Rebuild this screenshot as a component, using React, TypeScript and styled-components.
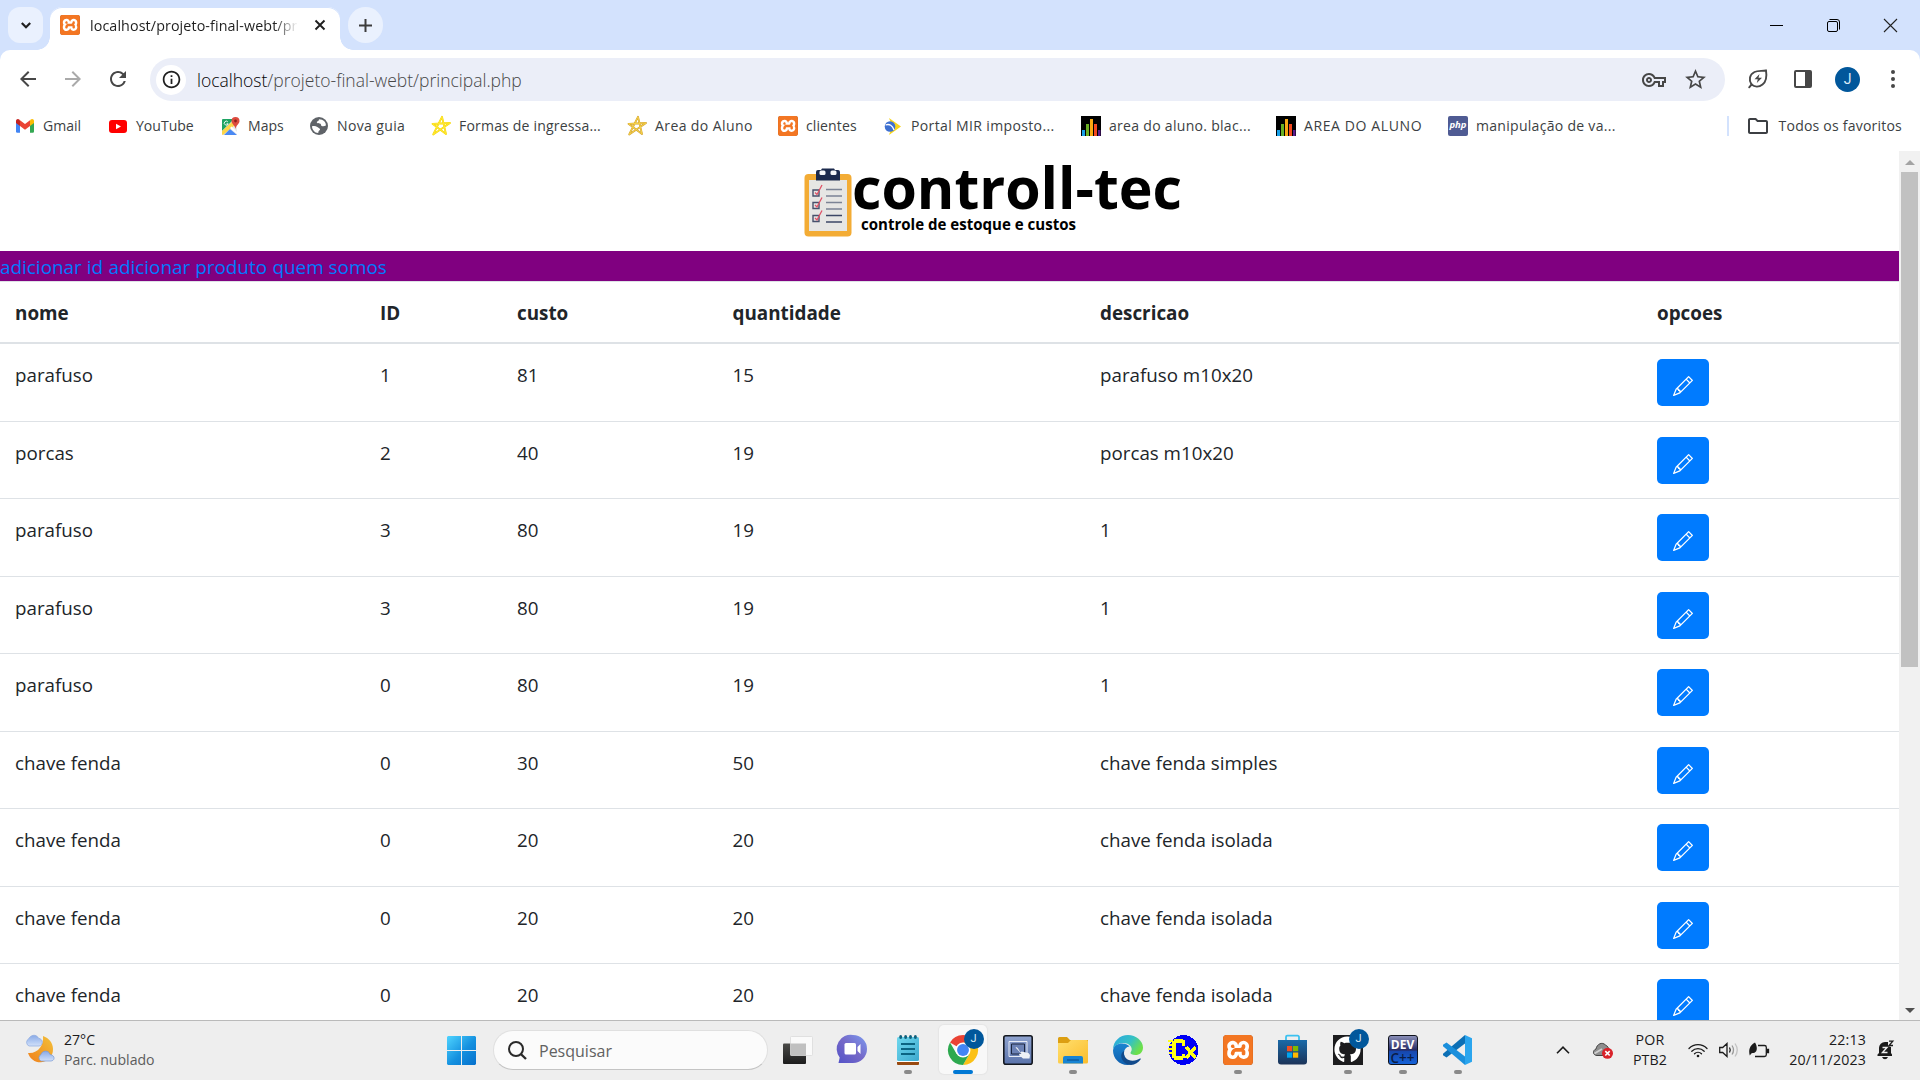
import React from "react";
import styled, { createGlobalStyle } from "styled-components";
import { BsPencil } from "react-icons/bs";
import { FaGithub } from "react-icons/fa";
import { SiXampp } from "react-icons/si";
import {
  MdArrowBack, MdArrowForward, MdRefresh, MdInfoOutline, MdStarBorder, MdOutlineVpnKey,
  MdOutlineFolder,
} from "react-icons/md";

const Global = createGlobalStyle`
  *, *::before, *::after { box-sizing: border-box; }
  body { margin: 0; overflow: hidden; }
  svg { display: block; flex: none; overflow: visible; }
`;

const Screen = styled.div`
  width: 1920px;
  height: 1080px;
  display: flex;
  flex-direction: column;
  background: #fff;
  overflow: hidden;
  font-family: "Open Sans", "Noto Sans", sans-serif;
  color: #1f1f1f;
`;

/* ---------- browser chrome ---------- */
const TabStrip = styled.header`
  flex: none;
  height: 50px;
  display: flex;
  padding: 7px 0 0 8px;
  background: #d3e2fd;
`;
const StripButton = styled.div<{ $radius: number }>`
  width: 35px;
  height: 36px;
  border-radius: ${(p) => p.$radius}px;
  background: #eaf1fe;
  display: grid;
  place-items: center;
`;
const Tab = styled.div`
  position: relative;
  width: 290px;
  height: 43px;
  margin: 0 8px 0 7px;
  padding: 0 13px 7px 10px;
  display: flex;
  align-items: center;
  background: #fff;
  border-radius: 12px 12px 0 0;
  box-shadow: inset 0 1px 0 #d3e2fd;
  &::before, &::after {
    content: "";
    position: absolute;
    bottom: 0;
    width: 13px;
    height: 13px;
  }
  &::before { left: -13px; background: radial-gradient(circle at 0 0, transparent 12.5px, #fff 13px); }
  &::after { right: -13px; background: radial-gradient(circle at 100% 0, transparent 12.5px, #fff 13px); }
`;
const TabTitle = styled.span`
  width: 208px;
  margin-left: 10px;
  margin-top: 1px;
  overflow: hidden;
  white-space: nowrap;
  font-size: 14.3px;
  letter-spacing: 0.1px;
  line-height: 22px;
  mask-image: linear-gradient(90deg, #000 184px, transparent 208px);
`;
const TabClose = styled.div`
  margin-left: auto;
`;
const WindowButtons = styled.div`
  margin-left: auto;
  display: flex;
  height: 36px;
  padding-right: 23px;
  gap: 44px;
  align-items: center;
`;
const ToolbarBack = styled.div`
  flex: none;
  background: #d3e2fd;
`;
const Toolbar = styled.div`
  height: 51px;
  padding: 8px 15px 0 16px;
  display: flex;
  align-items: center;
  background: #fff;
  border-radius: 10px 10px 0 0;
  color: #474747;
`;
const NavIcons = styled.div`
  display: flex;
  flex: none;
  gap: 21px;
  width: 134px;
  padding-bottom: 1px;
`;
const Omnibox = styled.div`
  flex: none;
  width: 1575px;
  height: 43px;
  border-radius: 22px;
  background: #ebeef8;
  display: flex;
  align-items: center;
  padding: 0 17px 0 6px;
`;
const InfoDisc = styled.div`
  width: 30px;
  height: 30px;
  border-radius: 50%;
  background: #fff;
  color: #1f1f1f;
  display: grid;
  place-items: center;
`;
const Address = styled.span`
  margin-left: 11px;
  font-size: 17.5px;
  font-weight: 300;
  line-height: 26px;
  color: #474747;
  b { font-weight: 300; color: #000; }
`;
const OmniIcons = styled.div`
  margin-left: auto;
  display: flex;
  gap: 17px;
  align-items: center;
`;
const ToolIcons = styled.div`
  flex: none;
  display: flex;
  align-items: center;
  padding-bottom: 1px;
`;
const Avatar = styled.div<{ $size: number }>`
  width: ${(p) => p.$size}px;
  height: ${(p) => p.$size}px;
  border-radius: 50%;
  background: #01579b;
  color: #dcebf7;
  font: ${(p) => Math.round(p.$size * 0.54)}px/1 Roboto, sans-serif;
  display: grid;
  place-items: center;
`;
const ToolSlot = styled.div<{ $w: number }>`
  width: ${(p) => p.$w}px;
  display: flex;
  justify-content: center;
`;
const Bookmarks = styled.nav`
  flex: none;
  height: 50px;
  display: flex;
  align-items: center;
  padding: 0 18px 0 15px;
  color: #3c3f43;
  font-size: 14.05px;
`;
const Bookmark = styled.div<{ $w: number; $track: number }>`
  width: ${(p) => p.$w}px;
  display: flex;
  align-items: center;
  gap: 8px;
  white-space: nowrap;
  letter-spacing: ${(p) => p.$track}px;
`;
const BookmarkLabel = styled.span`
  margin-bottom: 2px;
`;
const IconSlot = styled.span`
  width: 20px;
  height: 20px;
  display: grid;
  place-items: center;
  flex: none;
`;
const AllBookmarks = styled.div`
  margin-left: auto;
  display: flex;
  align-items: center;
  white-space: nowrap;
  letter-spacing: 0.2px;
  &::before {
    content: "";
    width: 2px;
    height: 20px;
    background: #d3e2fd;
    margin-right: 17px;
  }
  svg { margin-right: 9px; }
`;

/* ---------- page ---------- */
const Viewport = styled.div`
  height: 869px;
  flex: none;
  display: flex;
  overflow: hidden;
`;
const Page = styled.main`
  width: 1899px;
  flex: none;
`;
const Brand = styled.div`
  height: 100px;
  display: flex;
  padding: 17px 0 0 804px;
`;
const BrandText = styled.div`
  margin-left: 1px;
  color: #000;
  font-weight: 700;
  white-space: nowrap;
`;
const BrandName = styled.div`
  font-size: 57.2px;
  line-height: 58px;
  margin: -10px 0 0 -1px;
`;
const BrandTag = styled.div`
  font-size: 15.05px;
  line-height: 20px;
  margin: -2px 0 0 8px;
`;
const SiteNav = styled.nav`
  height: 30px;
  background: #800080;
  display: flex;
  gap: 5.4px;
  font-size: 18.9px;
  line-height: 32px;
`;
const NavLink = styled.a`
  color: #007bff;
`;
const Row = styled.div<{ $head?: boolean }>`
  display: grid;
  grid-template-columns: 365px 137px 215.5px 367.5px 557px 1fr;
  height: ${(p) => (p.$head ? "63px" : "77.5px")};
  margin-bottom: ${(p) => (p.$head ? "-0.6px" : "0")};
  border-top: 1px solid #dee2e6;
  border-bottom: ${(p) => (p.$head ? "2px solid #dee2e6" : "0")};
  font-size: ${(p) => (p.$head ? "18.85px" : "18.75px")};
  font-weight: ${(p) => (p.$head ? 700 : 400)};
  color: #212529;
  line-height: 32px;
  white-space: nowrap;
`;
const Cell = styled.div`
  padding: 14.8px 0 0 15px;
`;
const EditButton = styled.button`
  width: 52px;
  height: 47px;
  border: 0;
  border-radius: 5px;
  background: #007bff;
  color: #fff;
  padding: 16.8px 0 0 16px;
  display: flex;
  align-items: flex-start;
`;
const Scrollbar = styled.aside`
  width: 21px;
  height: 869px;
  background: #f1f1f1;
  display: flex;
  flex-direction: column;
`;
const ArrowBox = styled.div`
  height: 21px;
  padding-top: 2px;
  display: grid;
  place-items: center;
`;
const Thumb = styled.div`
  width: 17px;
  height: 495px;
  margin: 0 0 auto 2px;
  background: #c1c1c1;
`;

/* ---------- taskbar ---------- */
const Taskbar = styled.footer`
  height: 60px;
  flex: none;
  border-top: 1px solid #bababa;
  background: #eee;
  display: flex;
  padding-left: 25px;
`;
const Weather = styled.div`
  width: 422px;
  display: flex;
  padding-top: 9px;
  gap: 8px;
  font-size: 14.1px;
  line-height: 20px;
  color: #5c5c5c;
  svg { margin-top: 4px; }
  b { display: block; font-weight: 400; color: #1b1b1b; }
`;
const StartButton = styled.div`
  width: 46px;
  padding-top: 15px;
`;
const Search = styled.div`
  width: 275px;
  height: 40px;
  margin-top: 9px;
  border-radius: 20px;
  background: #fbfbfb;
  border: 1px solid #e0e0e0;
  border-bottom-color: #c4c4c4;
  display: flex;
  align-items: center;
  padding: 1px 0 0 14px;
  gap: 12px;
  color: #616161;
  font-size: 16px;
`;
const Apps = styled.div`
  display: flex;
  margin-left: 2px;
`;
const App55 = styled.div<{ $active?: boolean; $dot?: boolean }>`
  width: 55px;
  height: 59px;
  display: grid;
  justify-items: center;
  align-content: start;
  grid-template-rows: 49px 4px;
  & > :first-child {
    width: 48px;
    height: 49px;
    margin-top: 4px;
    border-radius: 5px;
    background: ${(p) => (p.$active ? "#f8f8f8" : "transparent")};
    box-shadow: ${(p) => (p.$active ? "0 0 1px 1px #e5e5e5" : "none")};
    display: grid;
    place-items: center;
  }
  &::after {
    content: "";
    width: ${(p) => (p.$active ? 20 : p.$dot ? 8 : 0)}px;
    height: 4px;
    border-radius: 2px;
    background: ${(p) => (p.$active ? "#0078d4" : "#8a8a8a")};
  }
`;
const Badged = styled.div`
  position: relative;
`;
const Badge = styled.div`
  position: absolute;
  top: -6px;
  left: 16px;
`;
const Tray = styled.div`
  margin-left: auto;
  display: flex;
  color: #1b1b1b;
  padding-right: 15px;
`;
const TrayItem = styled.div<{ $w: number }>`
  width: ${(p) => p.$w}px;
  height: 58px;
  display: grid;
  place-items: center;
`;
const TrayText = styled.div<{ $w: number; $align: string }>`
  width: ${(p) => p.$w}px;
  padding-top: 9px;
  font-size: 14.2px;
  letter-spacing: 0.15px;
  line-height: 20px;
  text-align: ${(p) => p.$align};
  white-space: nowrap;
`;

/* ---------- drawings ---------- */
const XamppTile = styled.span<{ $s: number }>`
  width: ${(p) => p.$s}px;
  height: ${(p) => p.$s}px;
  flex: none;
  border-radius: ${(p) => p.$s * 0.12}px;
  background: #fff;
  box-shadow: inset 0 0 0 1px #b3551d;
  color: #f37623;
  overflow: hidden;
`;
const Xampp = ({ s = 20 }: { s?: number }) => (
  <XamppTile $s={s}><SiXampp size={s} /></XamppTile>
);
const Globe = () => (
  <svg width="18" height="18" viewBox="0 0 18 18">
    <circle cx="9" cy="9" r="9" fill="#5f6368" />
    <path d="M8.500 2.200c1 .3.500 1.300-.5 1.800S6.500 5 7 5.800c.8.9 2.500.2 3.500 1 .8.700.2 1.700 1.200 2.200 1.300.5 2.800.2 4.200-.4.300-3.200-2.400-6.600-7.400-6.400z" fill="#fff" />
    <path d="M2 9.300c2-.6 4-.3 5.300.7 1 .9 2.200 1 2.700 2 .4 1.200-1 1.500-1.500 2.500-.2.500 0 1.200-.3 1.600C4.700 16 2 12.600 2 9.300z" fill="#fff" />
  </svg>
);
const Gmail = () => (
  <svg width="18" height="14" viewBox="0 0 18 14">
    <path d="M0 1.500V12.500a1.200 1.200 0 0 0 1.200 1.200H4V6z" fill="#4285f4" />
    <path d="M18 1.500V12.500a1.200 1.200 0 0 1-1.200 1.200H14V6z" fill="#34a853" />
    <path d="M14 1.500V7l4-3V2c0-2-2-2.600-3.300-1.500z" fill="#fbbc04" />
    <path d="M4 1.500V7L0 4V2C0 0 2-.6 3.300.5z" fill="#c5221f" />
    <path d="M4 1.200V7l5 3.800L14 7V1.200L9 5z" fill="#ea4335" />
  </svg>
);
const YouTube = () => (
  <svg width="18" height="13" viewBox="0 0 18 13">
    <rect width="18" height="13" rx="3" fill="#f00" />
    <path d="M7 3.700v5.600l5-2.800z" fill="#fff" />
  </svg>
);
const Maps = () => (
  <svg width="19" height="19" viewBox="0 0 19 19">
    <rect x="1" y="2" width="15" height="16" rx="1.500" fill="#e8eaed" />
    <path d="M1 3a1 1 0 0 1 1-1h11L1 14z" fill="#1fa463" />
    <path d="M1 14 12 4l2 4L2 18a1 1 0 0 1-1-1z" fill="#fdd548" />
    <path d="M3 18l6-6 7 6z" fill="#4a89f3" />
    <path d="M9 11l1.500-1.500L16 15v2z" fill="#fff" />
    <path d="M6.800 4.800a2 2 0 1 0 .4 2H5.500" fill="none" stroke="#fff" strokeWidth=".9" />
    <path d="M14.500 0a4 4 0 0 0-4 4c0 3 3.500 4 4 8 .5-4 4-5 4-8a4 4 0 0 0-4-4z" fill="#dd4b3e" />
    <circle cx="14.500" cy="4" r="1.400" fill="#8c1f1a" />
  </svg>
);
const Star = ({ c, d }: { c: string; d: string }) => (
  <svg width="20" height="20" viewBox="0 0 20 20" fill="none" strokeLinejoin="round">
    <path d="M11 .8 15 18 1.500 7.800 19 7 2.200 18.500z" stroke={d} strokeWidth="1.800" />
    <path d="M11 .8 15 18 1.500 7.800 19 7 2.200 18.500z" stroke={c} strokeWidth="1" />
  </svg>
);
const Portal = () => (
  <svg width="18" height="17" viewBox="0 0 18 17">
    <path d="M5 0 17 8.500 5 17 8 8z" fill="#f7d51d" />
    <circle cx="6" cy="8.500" r="5.300" fill="#3d6fd0" />
    <path d="M1.500 7c4-1.500 7 .500 8.500 5" fill="none" stroke="#fff" strokeWidth="1.300" />
  </svg>
);
const Bars = () => (
  <svg width="20" height="20" viewBox="0 0 20 20">
    <path d="M0 0h20v20H0z" fill="#000" />
    <path d="M1 14h3v6H1z" fill="#18a0e8" />
    <path d="M5 8h3v12H5z" fill="#6ab023" />
    <path d="M9 3h3v17H9z" fill="#f8a812" />
    <path d="M13 8h3v12h-3z" fill="#f4481e" />
    <path d="M17 14h2.500v6H17z" fill="#5a1a8c" />
  </svg>
);
const PhpBadge = styled.span`
  width: 20px;
  height: 20px;
  border-radius: 2px;
  background: #4f5b93;
  color: #fff;
  font: italic 700 9.5px/18px "Open Sans", sans-serif;
  letter-spacing: 0;
  text-align: center;
`;
const Leaf = () => (
  <svg width="20" height="20" viewBox="0 0 20 20" fill="none" stroke="#474747" strokeWidth="1.900" strokeLinejoin="round">
    <path d="M3.500 15.500C.5 11 1.500 5.500 6.500 3 10 1.300 14.500 2.300 18 1.300c.8 5 .5 11-3.500 14.200-3.500 2.800-8 2.500-11 0z" />
    <path d="M3.700 15.300 1.200 18.300" strokeLinecap="round" />
    <path d="m11.500 5-5 5.300h3.300L8.800 14l5.200-5.300h-3.500z" fill="#474747" stroke="none" />
  </svg>
);
const Moon = () => (
  <svg width="31" height="29" viewBox="0 0 31 29">
    <defs>
      <linearGradient id="moon" x1="1" y1="0" x2="0" y2="1"><stop stopColor="#f3c13a" /><stop offset="1" stopColor="#f0801c" /></linearGradient>
      <linearGradient id="cloud" x1="0" y1="0" x2="0" y2="1"><stop stopColor="#8aaae6" /><stop offset=".6" stopColor="#b4cbf3" /><stop offset="1" stopColor="#d2e0f8" /></linearGradient>
    </defs>
    <path d="M18 2c1 9-5 18-15 17 2 6 7 9.500 13 9.300A13 13 0 0 0 28 15C28 9 24 4 18 2z" fill="url(#moon)" />
    <path d="M4 12a4 4 0 0 1-.3-7.200C5 1.500 11-.8 13.500 4.200 18.500 5 18.500 11.500 14 12z" fill="url(#cloud)" stroke="#8ba9df" strokeWidth=".7" />
    <path d="M16 27a3.600 3.600 0 0 1 0-6.500c1-4 7.500-5 9 0 5 .5 5.500 6 1 6.500z" fill="url(#cloud)" stroke="#7799d6" strokeWidth=".7" />
  </svg>
);
const Windows = () => (
  <svg width="29" height="29" viewBox="0 0 29 29">
    <defs><linearGradient id="win" x1="0" y1="0" x2="29" y2="29" gradientUnits="userSpaceOnUse"><stop stopColor="#4fd4ff" /><stop offset=".55" stopColor="#1490df" /><stop offset="1" stopColor="#0670cc" /></linearGradient></defs>
    <path d="M1 0h13v14H0V1zM15 0h13l1 1v13H15zM0 15h14v14H1l-1-1zM15 15h14v13l-1 1H15z" fill="url(#win)" />
  </svg>
);
const TaskView = () => (
  <svg width="30" height="28" viewBox="0 0 30 28">
    <defs><linearGradient id="tv" x1="0" y1="0" x2="0" y2="1"><stop stopColor="#4a4a48" /><stop offset="1" stopColor="#1c1c1c" /></linearGradient></defs>
    <rect y="7.500" width="23" height="20.500" rx="1" fill="url(#tv)" />
    <rect x="7.500" y=".5" width="22" height="19" rx="1" fill="#fafafa" stroke="#dadada" strokeWidth=".8" />
    <path d="M7.500 7.500H23v12H7.500z" fill="#c0c0c0" />
  </svg>
);
const Chat = () => (
  <svg width="29" height="29" viewBox="0 0 29 29">
    <defs><linearGradient id="chat" x1="1" y1="0" x2="0" y2="1"><stop stopColor="#7c9cf0" /><stop offset=".5" stopColor="#7568c8" /><stop offset="1" stopColor="#5252c8" /></linearGradient></defs>
    <path d="M15 0A14 14 0 0 1 15 28H.5l1.200-5.500A14 14 0 0 1 15 0z" fill="url(#chat)" />
    <rect x="6.500" y="8" width="11.500" height="11.500" rx="1.500" fill="#fff" />
    <path d="M19.500 12l3-3v10l-3-3z" fill="#fff" />
  </svg>
);
const Notepad = () => (
  <svg width="22" height="30" viewBox="0 0 22 30">
    <defs><linearGradient id="np" x1="0" y1="0" x2="1" y2="1"><stop stopColor="#6fd8ee" /><stop offset="1" stopColor="#3da9cf" /></linearGradient></defs>
    <rect y="26" width="22" height="4" rx="1" fill="#994a10" />
    <rect y="22" width="22" height="5" fill="#fff" />
    <rect y="2" width="22" height="24" rx="1.500" fill="url(#np)" />
    <path d="M4 9h14M4 14h14M4 19h14" stroke="#0b6482" strokeWidth="1.800" />
    <g fill="#10607c"><ellipse cx="3.700" cy="2" rx="1.500" ry="2" /><ellipse cx="8.600" cy="2" rx="1.500" ry="2" /><ellipse cx="13.500" cy="2" rx="1.500" ry="2" /><ellipse cx="18.400" cy="2" rx="1.500" ry="2" /></g>
  </svg>
);
const Chrome = () => (
  <svg width="30" height="30" viewBox="0 0 48 48">
    <path d="M24 24 3.200 12A24 24 0 0 1 44.800 12z" fill="#ea4335" />
    <path d="M24 24V12h20.800A24 24 0 0 1 24 48l10.400-18z" fill="#fbc116" />
    <path d="M24 24 34.400 30 24 48A24 24 0 0 1 3.200 12L13.600 30z" fill="#2da94f" />
    <circle cx="24" cy="24" r="12" fill="#fff" />
    <circle cx="24" cy="24" r="9.500" fill="#4285f4" />
  </svg>
);
const Pointer = () => (
  <svg width="30" height="30" viewBox="0 0 30 30">
    <defs><linearGradient id="pt" x1="0" y1="0" x2="0" y2="1"><stop stopColor="#8fa3cf" /><stop offset="1" stopColor="#5a73ab" /></linearGradient></defs>
    <rect x=".8" y=".8" width="28.400" height="28.400" rx="2" fill="url(#pt)" stroke="#14181f" strokeWidth="1.600" />
    <path d="M6 6.500h18v15H6z" fill="none" stroke="#e6ebf5" />
    <path d="M8.500 9h13v10h-13z" fill="#6c82b5" stroke="#1d2740" />
    <path d="M12.500 12.500c1-.8 2 0 2.500 1l2.500 4 1-1 7 1.500 1.500 2-.5 3.500h-6.500l-4-3.500.5-1.200 2 .2z" fill="#eef1f6" />
  </svg>
);
const Folder = () => (
  <svg width="30" height="30" viewBox="0 0 30 30">
    <defs><linearGradient id="fo" x1="0" y1="0" x2="1" y2="1"><stop stopColor="#ffdf6e" /><stop offset="1" stopColor="#fbbd2c" /></linearGradient></defs>
    <path d="M0 3.500a1.500 1.500 0 0 1 1.500-1.500H9l3 3H30v8H0z" fill="#dc9f12" />
    <path d="M0 8h10l3-3h15.500A1.500 1.500 0 0 1 30 6.500V27a1.500 1.500 0 0 1-1.500 1.500h-27A1.500 1.500 0 0 1 0 27z" fill="url(#fo)" />
    <path d="M5 28.500V23a2 2 0 0 1 2-2h16a2 2 0 0 1 2 2v5.500z" fill="#1784d3" />
    <path d="M9 25h12" stroke="#0b5394" strokeWidth="1.200" />
  </svg>
);
const Edge = () => (
  <svg width="30" height="30" viewBox="0 0 30 30">
    <defs>
      <linearGradient id="e1" x1="0" y1="0" x2="1" y2=".5"><stop stopColor="#2aa6e0" /><stop offset=".6" stopColor="#35c1c4" /><stop offset="1" stopColor="#6de04a" /></linearGradient>
      <linearGradient id="e2" x1="0" y1="0" x2="0" y2="1"><stop stopColor="#1b84d0" /><stop offset="1" stopColor="#0f5fae" /></linearGradient>
    </defs>
    <path d="M0 15C0 6 7 0 15 0s15 6 15 12.500c0 5-3.500 7.500-7.500 7.500-3.500 0-5-1.200-5-2 0-1 1.200-1.500 1.200-4 0-3-3.700-6-8.200-6C5 8 .5 11.500 0 15z" fill="url(#e1)" />
    <path d="M0 15.500C.5 11 4.500 8.500 9 8.500c4 0 6.500 1.500 7.500 3-3 0-5.500 3-5.500 6.500 0 5 4 9.500 10 9.500-2 1.600-4 2.500-6.500 2.500C6 30 0 23 0 15.500z" fill="url(#e2)" />
    <path d="M11.200 16c-1.700 6 3.300 9.700 8.300 9.700 3.200 0 5.500-1 7.500-2.200.6-.3 1 .2.700.7C25.500 27.500 22 29.500 18 30 11 29.500 7 23.500 8.500 19c.5-1.500 1.500-2.500 2.700-3z" fill="#114a8b" />
  </svg>
);
const Cx = () => (
  <svg width="30" height="30" viewBox="0 0 30 30" shapeRendering="crispEdges">
    <circle cx="15.500" cy="15" r="14.800" fill="#0000f5" />
    <path d="M6 4h9v1h2v6h-3V8H8v13h6v-2h3v4h-2v2H6v-2H4V6h2z" fill="#ffff1a" />
    <path d="M0 6h5M1 10h4M0 14h5M1 18h4" fill="none" stroke="#ffff1a" strokeWidth="1.500" />
    <path d="M18 12l9.500 11M27.500 12 18 23" stroke="#ffff1a" strokeWidth="3.400" />
  </svg>
);
const Store = () => (
  <svg width="29" height="31" viewBox="0 0 29 31">
    <defs><linearGradient id="st" x1="0" y1="0" x2="0" y2="1"><stop stopColor="#1a6aa8" /><stop offset="1" stopColor="#1c3358" /></linearGradient></defs>
    <path d="M8 7V3a1.300 1.300 0 0 1 1.300-1.300h10.400A1.300 1.300 0 0 1 21 3v4" fill="none" stroke="#3cc1f0" strokeWidth="1.800" />
    <path d="M0 6h29v21.500a3 3 0 0 1-3 3H3a3 3 0 0 1-3-3z" fill="url(#st)" />
    <path d="M9 12h5.200v5.200H9z" fill="#f25022" /><path d="M15 12h5.200v5.200H15z" fill="#7fba00" />
    <path d="M9 18.500h5.200v5.200H9z" fill="#00a4ef" /><path d="M15 18.500h5.200v5.200H15z" fill="#ffb900" />
  </svg>
);
const GithubTile = styled.div`
  width: 30px;
  height: 30px;
  background: #1c1c1e;
  color: #fff;
  display: grid;
  place-items: center;
`;
const DevTile = styled.div`
  width: 30px;
  height: 30px;
  border: 1px solid #10131c;
  border-radius: 3px;
  background: linear-gradient(#8a8fb8, #262a63 50%, #1747ad 55%, #1462d8);
  color: #fff;
  font: 700 12px/14px "Open Sans", sans-serif;
  text-align: center;
  padding-top: 2px;
  i { display: block; font-style: normal; font-weight: 600; font-size: 13.5px; line-height: 12px; color: #0b1c45; }
`;
const VsCode = () => (
  <svg width="30" height="30" viewBox="0 0 30 30">
    <path d="M22 0v8.500L3.500 22.500 0 20.300v-1.500z" fill="#0c6fb5" />
    <path d="M22 30v-8.500L3.500 7.500 0 9.700v1.500z" fill="#1a8fdc" />
    <path d="M22 0 29 3.200V26.800L22 30z" fill="#2aa5ee" />
  </svg>
);
const Lens = () => (
  <svg width="19" height="19" viewBox="0 0 19 19" fill="none" stroke="#2a2a2a">
    <circle cx="8" cy="8" r="7" strokeWidth="2" /><path d="M12.800 13 18 18" strokeWidth="2.400" />
  </svg>
);
const Clipboard = () => (
  <svg width="48" height="69" viewBox="0 0 48 69">
    <rect x=".5" y="6" width="47" height="62.500" rx="4" fill="#f3ac35" />
    <path d="M5 12h38v51H5z" fill="#e6e6e4" />
    <path d="M12 12.500V4a2 2 0 0 1 2-2h3l1-1.500h12L31 2h3a2 2 0 0 1 2 2v8.500z" fill="#1c2a4d" />
    <rect x="15.500" y="2.500" width="6" height="4.500" rx="1.500" fill="#f6f7f9" /><rect x="26.500" y="2.500" width="6" height="4.500" rx="1.500" fill="#f6f7f9" />
    <g fill="none" strokeWidth="1.300"><path d="M22 21.500h16M22 28h16M22 34.500h16M22 41h16" stroke="#7b8395" /><path d="M22 47.500h16M22 54h16" stroke="#3d4766" /></g>
    <g fill="none" stroke="#47506b" strokeWidth="1.400"><path d="M9 22h6v6H9zM9 34.500h6v6H9zM9 47.500h6v6H9z" /></g>
    <g fill="none" stroke="#e05266" strokeWidth="1.300"><path d="M11 24.500l2 2L18 17M11 37l2 2 5-9.500M11 50l2 2 5-9.500" /></g>
  </svg>
);
const Wifi = () => (
  <svg width="20" height="15" viewBox="0 0 20 15" fill="none" stroke="#1b1b1b" strokeWidth="1.300" strokeLinecap="round">
    <path d="M1 5.500a12.500 12.500 0 0 1 18 0M3.800 8.200a8.700 8.700 0 0 1 12.400 0M6.500 10.800a5 5 0 0 1 7 0" /><circle cx="10" cy="13" r="1.300" fill="#1b1b1b" stroke="none" />
  </svg>
);
const Speaker = () => (
  <svg width="20" height="16" viewBox="0 0 20 16" fill="none" stroke="#1b1b1b" strokeWidth="1.300">
    <path d="M.700 5.500h3L8 1.500v13l-4.300-4h-3zM10.500 5.500q1.500 2.500 0 5" /><path d="M13 3.500q3 4.500 0 9" stroke="#999" /><path d="M16 1.500q4.500 6.500 0 13" stroke="#c2c2c2" />
  </svg>
);
const Battery = () => (
  <svg width="20" height="18" viewBox="0 0 20 18" fill="none" stroke="#1b1b1b" strokeWidth="1.300">
    <path d="M9 4.500h6.500a1.800 1.800 0 0 1 1.800 1.800v7.400a1.800 1.800 0 0 1-1.800 1.800H6" /><path d="M18 8.500h1.500v3H18z" fill="#1b1b1b" />
    <path d="M.8 14.500C-.5 9.500 0 5 6 1.500c2.500 4 2.500 9-.5 10.200-1.500.5-2.700 0-3.200.8z" fill="#1b1b1b" stroke="none" />
  </svg>
);
const CloudError = () => (
  <svg width="20" height="17" viewBox="0 0 20 17">
    <path d="M4 13.500c-4 0-5-5-1-6.500C4 2 9-.5 12.500 3c2 1 3.500 3 3.500 5.500l-4 5z" fill="#8e8e8e" stroke="#444" />
    <path d="M1.500 11.500 9 7" stroke="#d0d0d0" strokeWidth="2" />
    <circle cx="14.500" cy="11.300" r="5.500" fill="#d9222a" /><path d="m12.300 9.100 4.400 4.400m0-4.400-4.400 4.400" stroke="#fff" strokeWidth="1.600" />
  </svg>
);
const BellZ = () => (
  <svg width="17" height="20" viewBox="0 0 17 20">
    <path d="M2 13V8a6 6 0 0 1 6-6h3v4l3 1v6l1 1.500v1.500H.500v-1.500zM5 17h6q-1 2.200-3 2.200T5 17z" fill="#1b1b1b" />
    <path d="M5.500 7.500h4.500l-4.500 5h5" fill="none" stroke="#eee" strokeWidth="1.400" /><path d="M12 1.200h3.800l-3.800 4.300h4" fill="none" stroke="#1b1b1b" strokeWidth="1.300" />
  </svg>
);

/* ---------- data ---------- */
const bookmarks: [React.ReactNode, string, number, number][] = [
  [<Gmail />, "Gmail", 93, 0],
  [<YouTube />, "YouTube", 112, 0],
  [<Maps />, "Maps", 89, 0],
  [<Globe />, "Nova guia", 122, 0.35],
  [<Star c="#ffe838" d="#f7d800" />, "Formas de ingressa...", 196, 0.17],
  [<Star c="#f7d24a" d="#cf9f2c" />, "Area do Aluno", 151, 0.38],
  [<Xampp />, "clientes", 105, 0.1],
  [<Portal />, "Portal MIR imposto...", 198, 0.34],
  [<Bars />, "area do aluno. blac...", 195, 0.28],
  [<Bars />, "AREA DO ALUNO", 172, 0.58],
  [<PhpBadge>php</PhpBadge>, "manipulação de va...", 180, 0.27],
];
const products = [
  ["parafuso", "1", "81", "15", "parafuso m10x20"],
  ["porcas", "2", "40", "19", "porcas m10x20"],
  ["parafuso", "3", "80", "19", "1"],
  ["parafuso", "3", "80", "19", "1"],
  ["parafuso", "0", "80", "19", "1"],
  ["chave fenda", "0", "30", "50", "chave fenda simples"],
  ["chave fenda", "0", "20", "20", "chave fenda isolada"],
  ["chave fenda", "0", "20", "20", "chave fenda isolada"],
  ["chave fenda", "0", "20", "20", "chave fenda isolada"],
];
const withBadge = (icon: React.ReactNode) => (
  <Badged>{icon}<Badge><Avatar $size={20}>J</Avatar></Badge></Badged>
);
const apps: { icon: React.ReactNode; active?: boolean; dot?: boolean }[] = [
  { icon: <TaskView /> },
  { icon: <Chat /> },
  { icon: <Notepad />, dot: true },
  { icon: withBadge(<Chrome />), active: true },
  { icon: <Pointer /> },
  { icon: <Folder />, dot: true },
  { icon: <Edge /> },
  { icon: <Cx /> },
  { icon: <Xampp s={30} />, dot: true },
  { icon: <Store /> },
  { icon: withBadge(<GithubTile><FaGithub size={27} /></GithubTile>), dot: true },
  { icon: <DevTile>DEV<i>C++</i></DevTile>, dot: true },
  { icon: <VsCode />, dot: true },
];

export default function App() {
  return (
    <Screen>
      <Global />
      <TabStrip>
        <StripButton $radius={12}>
          <svg width="10" height="7" viewBox="0 0 10 7" fill="none" stroke="#1f1f1f" strokeWidth="2.200"><path d="M.8 1 5 5.200 9.200 1" /></svg>
        </StripButton>
        <Tab>
          <Xampp />
          <TabTitle>localhost/projeto-final-webt/pri</TabTitle>
          <TabClose>
            <svg width="14" height="10" viewBox="0 0 14 10" stroke="#1f1f1f" strokeWidth="1.900"><path d="m2.500.500 9 9m0-9-9 9" /></svg>
          </TabClose>
        </Tab>
        <StripButton $radius={18}>
          <svg width="13" height="13" viewBox="0 0 13 13" stroke="#3c3c3c" strokeWidth="2"><path d="M6.500 0v13M0 6.500h13" /></svg>
        </StripButton>
        <WindowButtons>
          <svg width="13" height="13" viewBox="0 0 13 13" stroke="#000"><path d="M0 6.500h13" /></svg>
          <svg width="13" height="13" viewBox="0 0 13 13" fill="none" stroke="#000"><rect x=".5" y="2.500" width="10" height="10" rx="1.500" /><path d="M2.500.5h7.500a2.500 2.500 0 0 1 2.500 2.500v7.500" /></svg>
          <svg width="13" height="13" viewBox="0 0 13 13" stroke="#222" strokeWidth="1.100"><path d="m0 0 13 13M13 0 0 13" /></svg>
        </WindowButtons>
      </TabStrip>
      <ToolbarBack>
        <Toolbar>
          <NavIcons>
            <MdArrowBack size={24} /><MdArrowForward size={24} color="#aaa" /><MdRefresh size={24} />
          </NavIcons>
          <Omnibox>
            <InfoDisc><MdInfoOutline size={21} /></InfoDisc>
            <Address><b>localhost</b>/projeto-final-webt/principal.php</Address>
            <OmniIcons><MdOutlineVpnKey size={24} /><MdStarBorder size={25} /></OmniIcons>
          </Omnibox>
          <ToolIcons>
            <ToolSlot $w={65}><Leaf /></ToolSlot>
            <ToolSlot $w={25}>
              <svg width="18" height="18" viewBox="0 0 18 18"><rect x="1" y="1" width="16" height="16" rx="1" fill="none" stroke="#474747" strokeWidth="2" /><path d="M11 1h6v16h-6z" fill="#474747" /></svg>
            </ToolSlot>
            <ToolSlot $w={65}><Avatar $size={25}>J</Avatar></ToolSlot>
            <ToolSlot $w={25}>
              <svg width="4" height="18" viewBox="0 0 4 18" fill="#474747"><circle cx="2" cy="2" r="2" /><circle cx="2" cy="9" r="2" /><circle cx="2" cy="16" r="2" /></svg>
            </ToolSlot>
          </ToolIcons>
        </Toolbar>
      </ToolbarBack>
      <Bookmarks>
        {bookmarks.map(([icon, text, w, track]) => (
          <Bookmark key={text} $w={w} $track={track}>
            <IconSlot>{icon}</IconSlot>
            <BookmarkLabel>{text}</BookmarkLabel>
          </Bookmark>
        ))}
        <AllBookmarks><MdOutlineFolder size={24} /><BookmarkLabel>Todos os favoritos</BookmarkLabel></AllBookmarks>
      </Bookmarks>

      <Viewport>
        <Page>
          <Brand>
            <Clipboard />
            <BrandText>
              <BrandName>controll-tec</BrandName>
              <BrandTag>controle de estoque e custos</BrandTag>
            </BrandText>
          </Brand>
          <SiteNav>
            <NavLink>adicionar id</NavLink><NavLink>adicionar produto</NavLink><NavLink>quem somos</NavLink>
          </SiteNav>
          <Row $head>
            {["nome", "ID", "custo", "quantidade", "descricao", "opcoes"].map((h) => <Cell key={h}>{h}</Cell>)}
          </Row>
          {products.map((p, i) => (
            <Row key={i}>
              {p.map((v, j) => <Cell key={j}>{v}</Cell>)}
              <Cell><EditButton><BsPencil size={20} /></EditButton></Cell>
            </Row>
          ))}
        </Page>
        <Scrollbar>
          <ArrowBox><svg width="10" height="5" viewBox="0 0 10 5"><path d="M0 5 5 0l5 5z" fill="#a3a3a3" /></svg></ArrowBox>
          <Thumb />
          <ArrowBox><svg width="10" height="5" viewBox="0 0 10 5"><path d="m0 0 5 5 5-5z" fill="#505050" /></svg></ArrowBox>
        </Scrollbar>
      </Viewport>

      <Taskbar>
        <Weather><Moon /><div><b>27°C</b>Parc. nublado</div></Weather>
        <StartButton><Windows /></StartButton>
        <Search><Lens />Pesquisar</Search>
        <Apps>
          {apps.map((a, i) => (
            <App55 key={i} $active={a.active} $dot={a.dot}><div>{a.icon}</div></App55>
          ))}
        </Apps>
        <Tray>
          <TrayItem $w={40}><svg width="14" height="8" viewBox="0 0 14 8" fill="none" stroke="#1b1b1b" strokeWidth="1.600"><path d="M1 7.200 7 1.200l6 6" /></svg></TrayItem>
          <TrayItem $w={40}><CloudError /></TrayItem>
          <TrayText $w={54} $align="center">POR<br />PTB2</TrayText>
          <TrayItem $w={42}><Wifi /></TrayItem>
          <TrayItem $w={20}><Speaker /></TrayItem>
          <TrayItem $w={40}><Battery /></TrayItem>
          <TrayText $w={87} $align="right">22:13<br />20/11/2023</TrayText>
          <TrayItem $w={39}><BellZ /></TrayItem>
        </Tray>
      </Taskbar>
    </Screen>
  );
}
